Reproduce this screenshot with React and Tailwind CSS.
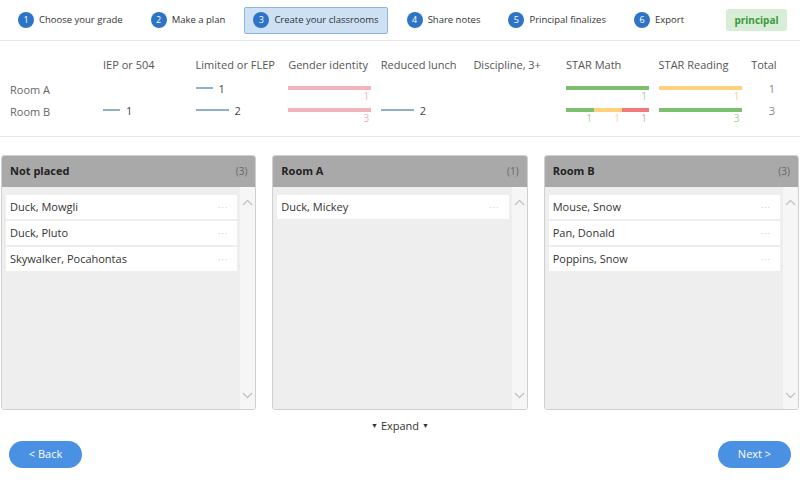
import React from "react";

const STEPS = [
  { n: 1, label: "Choose your grade" },
  { n: 2, label: "Make a plan" },
  { n: 3, label: "Create your classrooms", active: true },
  { n: 4, label: "Share notes" },
  { n: 5, label: "Principal finalizes" },
  { n: 6, label: "Export" },
];

const HEADERS = [
  "IEP or 504",
  "Limited or FLEP",
  "Gender identity",
  "Reduced lunch",
  "Discipline, 3+",
  "STAR Math",
  "STAR Reading",
  "Total",
];

const COLORS = {
  pink: { bar: "bg-[#f2b3bd]", text: "text-[#f2b3bd]" },
  green: { bar: "bg-[#7cbf6f]", text: "text-[#a3d397]" },
  yellow: { bar: "bg-[#fdd17d]", text: "text-[#fcd38a]" },
  red: { bar: "bg-[#f17b7b]", text: "text-[#f4a0a0]" },
};

// each cell: null | {line: count} | {segments: [...]} | {total: n}
const ROWS = [
  {
    label: "Room A",
    cells: [
      null,
      { line: 1 },
      { segments: [{ color: "pink", w: 83, n: 1 }] },
      null,
      null,
      { segments: [{ color: "green", w: 83, n: 1 }] },
      { segments: [{ color: "yellow", w: 83, n: 1 }] },
      { total: 1 },
    ],
  },
  {
    label: "Room B",
    cells: [
      { line: 1 },
      { line: 2 },
      { segments: [{ color: "pink", w: 83, n: 3 }] },
      { line: 2 },
      null,
      {
        segments: [
          { color: "green", w: 28, n: 1 },
          { color: "yellow", w: 28, n: 1 },
          { color: "red", w: 27, n: 1 },
        ],
      },
      { segments: [{ color: "green", w: 83, n: 3 }] },
      { total: 3 },
    ],
  },
];

const PANELS = [
  { title: "Not placed", count: 3, students: ["Duck, Mowgli", "Duck, Pluto", "Skywalker, Pocahontas"] },
  { title: "Room A", count: 1, students: ["Duck, Mickey"] },
  { title: "Room B", count: 3, students: ["Mouse, Snow", "Pan, Donald", "Poppins, Snow"] },
];

function Chevron({ up }) {
  return (
    <svg width="11" height="7" viewBox="0 0 11 7" fill="none">
      <path
        d={up ? "M1 6 L5.5 1.5 L10 6" : "M1 1 L5.5 5.5 L10 1"}
        stroke="#c4c4c4"
        strokeWidth="1.4"
      />
    </svg>
  );
}

function StatCell({ cell }) {
  if (!cell) return <div />;
  if (cell.line) {
    return (
      <div className="flex h-[18px] items-center gap-[6px]">
        <div className="h-[2px] bg-[#8db1cc]" style={{ width: cell.line * 16 + 1 }} />
        <span className="text-[11px] leading-none text-[#444]">{cell.line}</span>
      </div>
    );
  }
  if (cell.total) {
    return (
      <div className="flex h-[20px] w-[24px] items-center justify-end text-[11px] text-[#8a8a8a]">
        {cell.total}
      </div>
    );
  }
  return (
    <div className="flex pt-[7px]">
      {cell.segments.map((s, i) => (
        <div key={i} className="flex flex-col" style={{ width: s.w }}>
          <div className={`h-[4px] ${COLORS[s.color].bar}`} />
          <div className={`mt-[1px] pr-[2px] text-right text-[10px] leading-[11px] ${COLORS[s.color].text}`}>
            {s.n}
          </div>
        </div>
      ))}
    </div>
  );
}

function Panel({ title, count, students }) {
  return (
    <div className="flex h-[255px] flex-col overflow-hidden rounded-[3px] border border-[#cfcfcf]">
      <div className="flex h-[31px] shrink-0 items-center justify-between bg-[#a9a9a9] px-[8px]">
        <span className="text-[11px] font-bold text-[#222]">{title}</span>
        <span className="text-[10px] text-[#666]">({count})</span>
      </div>
      <div className="flex flex-1 bg-[#eeeeee]">
        <div className="flex flex-1 flex-col gap-[2px] pl-[4px] pr-[3px] pt-[8px]">
          {students.map((s) => (
            <div key={s} className="flex h-[24px] items-center justify-between bg-white pl-[4px] pr-[9px]">
              <span className="text-[11px] text-[#333]">{s}</span>
              <span className="text-[9px] leading-none tracking-[1px] text-[#c8c8c8]">···</span>
            </div>
          ))}
        </div>
        <div className="flex w-[15px] flex-col items-center justify-between bg-[#f6f6f6] pb-[10px] pt-[12px]">
          <Chevron up />
          <Chevron />
        </div>
      </div>
    </div>
  );
}

export default function App() {
  return (
    <div className="flex h-[480px] w-[800px] flex-col overflow-hidden bg-white font-['Open_Sans',sans-serif] text-[#333]">
      {/* steps */}
      <div className="flex h-[41px] shrink-0 items-center gap-[10px] border-b border-[#e6e6e6] pl-[9px] pr-[13px]">
        {STEPS.map((s) => (
          <div
            key={s.n}
            className={[
              "flex h-[27px] items-center gap-[5px] rounded-[2px] border px-[8px]",
              s.active ? "border-[#8eb5de] bg-[#cde0f4]" : "border-transparent",
            ].join(" ")}
          >
            <div className="flex h-[16px] w-[16px] items-center justify-center rounded-full bg-[#2e74c6] text-[9px] text-white">
              {s.n}
            </div>
            <span className="whitespace-nowrap text-[9.5px] text-[#333]">{s.label}</span>
          </div>
        ))}
        <div className="ml-auto flex h-[22px] w-[61px] items-center justify-center rounded-[3px] bg-[#d6edd6] text-[10px] font-bold text-[#3a9a3a]">
          principal
        </div>
      </div>

      {/* stats */}
      <div className="shrink-0 border-b border-[#e6e6e6] pb-[13px] pl-[10px] pt-[16px]">
        <div className="grid grid-cols-[93px_repeat(7,92.6px)_1fr] text-[11px] leading-[16px] text-[#555]">
          <div />
          {HEADERS.map((h) => (
            <div key={h} className="whitespace-nowrap">{h}</div>
          ))}
        </div>
        <div className="mt-[6px]">
          {ROWS.map((r) => (
            <div key={r.label} className="grid h-[22px] grid-cols-[93px_repeat(7,92.6px)_1fr] items-start">
              <div className="flex h-[22px] items-center text-[11px] text-[#666]">{r.label}</div>
              {r.cells.map((c, i) => (
                <StatCell key={i} cell={c} />
              ))}
            </div>
          ))}
        </div>
      </div>

      {/* panels */}
      <div className="mt-[18px] grid grid-cols-3 gap-4 px-px">
        {PANELS.map((p) => (
          <Panel key={p.title} {...p} />
        ))}
      </div>

      <div className="mt-[8px] flex items-center justify-center gap-[3px] text-[11px] text-[#333]">
        <span className="text-[7px]">▼</span>
        <span>Expand</span>
        <span className="text-[7px]">▼</span>
      </div>

      <div className="mt-[6px] flex justify-between px-[9px]">
        <button className="h-[27px] w-[73px] rounded-full bg-[#4a91e3] text-[11px] text-white">&lt; Back</button>
        <button className="h-[27px] w-[73px] rounded-full bg-[#4a91e3] text-[11px] text-white">Next &gt;</button>
      </div>
    </div>
  );
}
